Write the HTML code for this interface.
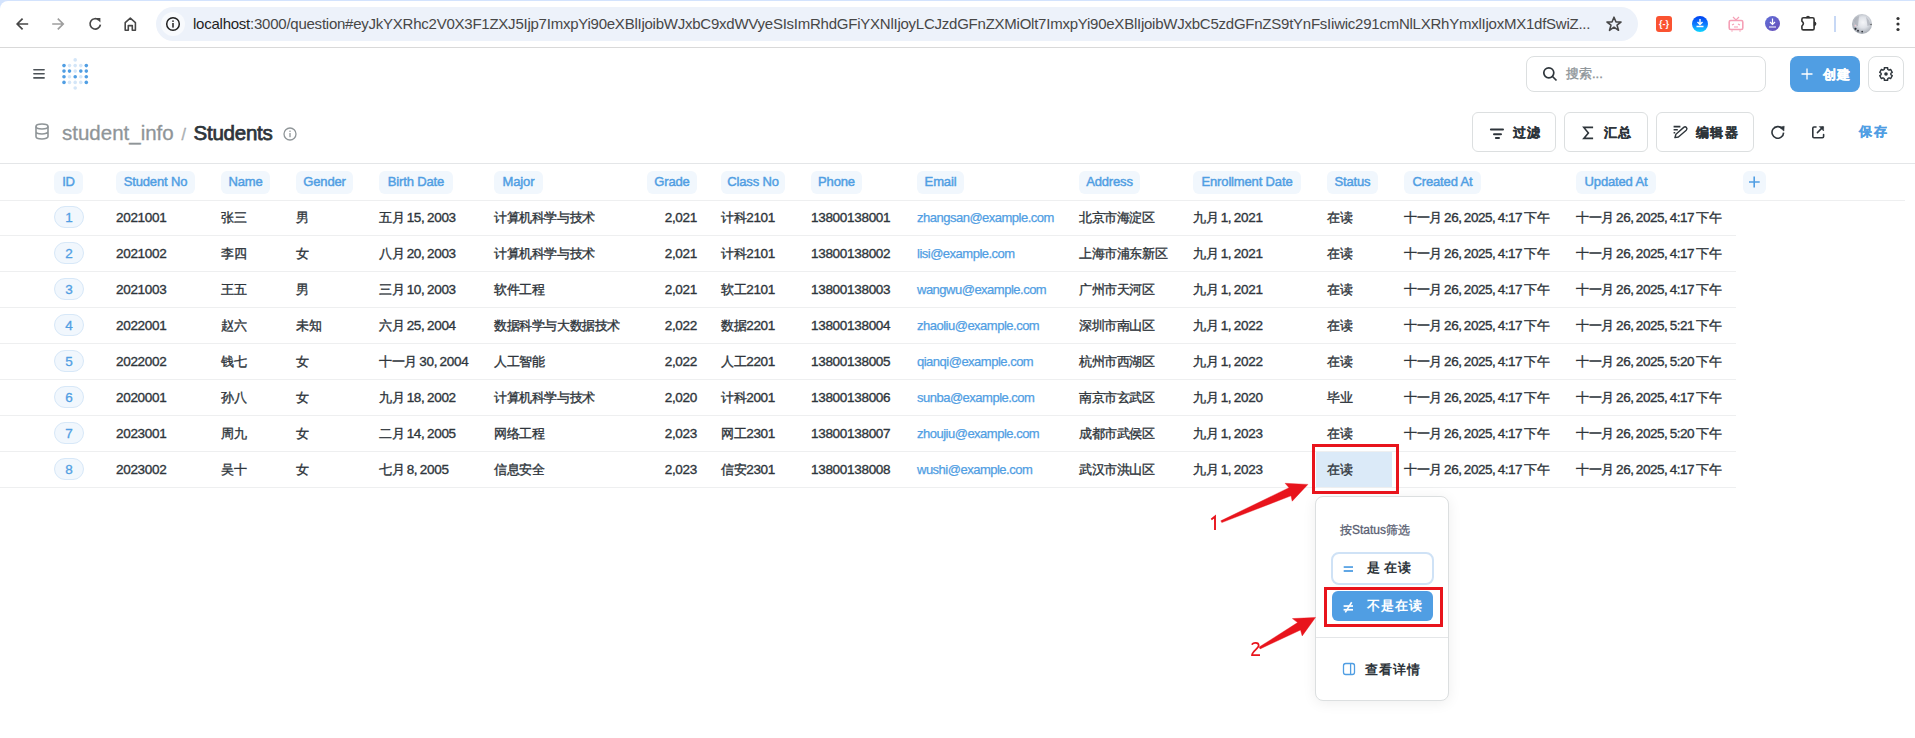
<!DOCTYPE html>
<html><head><meta charset="utf-8">
<style>
*{box-sizing:border-box;margin:0;padding:0}
html,body{width:1915px;height:738px;overflow:hidden;background:#fff;font-family:"Liberation Sans",sans-serif;position:relative}
.abs{position:absolute}
/* chrome */
#topstrip{position:absolute;left:0;top:0;width:1915px;height:12px;background:#d3e3fd}
#toolbar{position:absolute;left:0;top:1px;width:1915px;height:46px;background:#fff;border-top-left-radius:8px}
#tbline{position:absolute;left:0;top:47px;width:1915px;height:1px;background:#d9d9d9}
#omni{position:absolute;left:156px;top:7px;width:1482px;height:34px;border-radius:17px;background:#edf2fa}
#infobg{position:absolute;left:161px;top:12px;width:24px;height:24px;border-radius:12px;background:#f8fafd}
#url{position:absolute;left:193px;top:14px;height:20px;line-height:20px;font-size:15px;color:#474747;white-space:nowrap;letter-spacing:-0.24px}
#url b{font-weight:normal;color:#1f1f1f}
/* metabase nav */
#search{position:absolute;left:1526px;top:56px;width:240px;height:36px;border:1px solid #dcdfe0;border-radius:8px;background:#fff}
#search span{position:absolute;left:39px;top:9px;font-size:13px;color:#8e9599;-webkit-text-stroke:0.35px #8e9599;line-height:16px}
#create{position:absolute;left:1790px;top:56px;width:70px;height:36px;border-radius:8px;background:#509ee3;color:#fff;font-weight:bold;font-size:13px;letter-spacing:1.2px;-webkit-text-stroke:0.3px #fff}
#gear{position:absolute;left:1868px;top:56px;width:36px;height:36px;border:1px solid #dcdfe0;border-radius:8px;background:#fff}
/* title */
#crumb{position:absolute;left:62px;top:121px;font-size:20.5px;line-height:24px;color:#8f9598;white-space:nowrap;-webkit-text-stroke:0.3px #8f9598}
#crumb b{color:#2e353b;font-weight:normal;font-size:20.5px;letter-spacing:-0.25px;-webkit-text-stroke:0.75px #2e353b}
.btn{position:absolute;top:112px;height:40px;border:1px solid #dcdfe0;border-radius:6px;background:#fff;font-size:13px;letter-spacing:1.2px;font-weight:bold;color:#2e353b;-webkit-text-stroke:0.3px #2e353b}
.btn span{position:absolute;top:10.5px;line-height:17px}
#save{position:absolute;left:1859px;top:122.5px;font-size:13px;letter-spacing:1.5px;font-weight:bold;color:#509ee3;-webkit-text-stroke:0.3px #509ee3;line-height:17px}
/* table */
#ttop{position:absolute;left:0;top:163px;width:1915px;height:1px;background:#e4e6e8}
#hbot{position:absolute;left:0;top:200px;width:1905px;height:1px;background:#eeeff0}
.hp{position:absolute;top:171px;height:23px;border-radius:6px;background:#f1f7fd;color:#509ee3;font-size:13px;-webkit-text-stroke:0.45px #509ee3;line-height:22.5px;text-align:center;white-space:nowrap;letter-spacing:-0.15px}
.hp.plus svg{position:absolute;left:5.5px;top:5px}
.row{position:absolute;left:0;width:1736px;height:36px;border-bottom:1px solid #eeeff0}
.row .c{position:absolute;top:8.5px;line-height:17px;font-size:13.5px;letter-spacing:-0.3px;color:#2e353b;white-space:nowrap;-webkit-text-stroke:0.35px #2e353b;word-spacing:-1px}
.row .c .k{letter-spacing:-0.4px;font-size:13px}
.row .c.dt{letter-spacing:-0.45px}
.row .c.em{color:#509ee3;-webkit-text-stroke:0.25px #509ee3;font-size:13px;letter-spacing:-0.5px}
.idp{position:absolute;left:54px;top:6px;width:30px;height:22px;border-radius:11px;border:1px solid #d7e8f8;background:#f1f7fd;color:#509ee3;font-size:13.5px;-webkit-text-stroke:0.3px #509ee3;text-align:center;line-height:21px}
/* popover */
#hlcell{position:absolute;left:1316px;top:452px;width:76px;height:35px;background:#dbeaf8}
#pop{position:absolute;left:1315px;top:496px;width:134px;height:205px;border:1px solid #dcdfe0;border-radius:8px;background:#fff;box-shadow:0 2px 14px rgba(0,0,0,0.07)}
.redbox{position:absolute;border:3px solid #e8141c}
</style></head>
<body>
<div id="topstrip"></div>
<div id="toolbar"></div>
<div id="tbline"></div>
<!-- nav icons -->
<svg class="abs" style="left:14px;top:14px" width="20" height="20" viewBox="0 0 20 20"><path d="M14.2 10H3.5M8.6 4.6L3.2 10L8.6 15.4" fill="none" stroke="#474747" stroke-width="1.7"/></svg>
<svg class="abs" style="left:50px;top:14px" width="20" height="20" viewBox="0 0 20 20"><path d="M2.2 10H12.9M7.8 4.6L13.2 10L7.8 15.4" fill="none" stroke="#9e9e9e" stroke-width="1.7"/></svg>
<svg class="abs" style="left:86px;top:14px" width="20" height="20" viewBox="0 0 20 20"><path d="M14.4 10.6A5.2 5.2 0 1 1 12.9 6.2" fill="none" stroke="#474747" stroke-width="1.7"/><path d="M10 4.1H14.4V8.5Z" fill="#474747"/></svg>
<svg class="abs" style="left:122px;top:14px" width="20" height="20" viewBox="0 0 20 20"><path d="M3.2 16.2V8.6L8.3 4.2L13.4 8.6V16.2H10.3V11.6H6.3V16.2Z" fill="none" stroke="#474747" stroke-width="1.6" stroke-linejoin="round"/></svg>
<div id="omni"></div>
<div id="infobg"></div>
<svg class="abs" style="left:165px;top:16px" width="16" height="16" viewBox="0 0 16 16"><circle cx="8" cy="8" r="6.3" fill="none" stroke="#1f1f1f" stroke-width="1.5"/><rect x="7.25" y="7" width="1.5" height="4.6" fill="#1f1f1f"/><rect x="7.25" y="4.4" width="1.5" height="1.5" fill="#1f1f1f"/></svg>
<div id="url"><b>localhost</b>:3000/question#eyJkYXRhc2V0X3F1ZXJ5Ijp7ImxpYi90eXBlIjoibWJxbC9xdWVyeSIsImRhdGFiYXNlIjoyLCJzdGFnZXMiOlt7ImxpYi90eXBlIjoibWJxbC5zdGFnZS9tYnFsIiwic291cmNlLXRhYmxlIjoxMX1dfSwiZ...</div>
<svg class="abs" style="left:1604px;top:14px" width="20" height="20" viewBox="0 0 20 20"><path d="M10 3.2L12 8H17L13 11.1L14.5 16.3L10 13.2L5.5 16.3L7 11.1L3 8H8Z" fill="none" stroke="#474747" stroke-width="1.6" stroke-linejoin="round"/></svg>
<!-- extensions -->
<div class="abs" style="left:1656px;top:16px;width:16px;height:16px;border-radius:3px;background:#fa5331;color:#fff;font-size:9px;line-height:16px;text-align:center;font-weight:bold">{-}</div>
<div class="abs" style="left:1692px;top:16px;width:16px;height:16px;border-radius:8px;background:linear-gradient(#0040f0,#1080ff 55%,#10d8ff)"></div>
<svg class="abs" style="left:1696px;top:19px" width="8" height="9" viewBox="0 0 8 9"><path d="M4 0V5M1.5 3L4 5.5L6.5 3M0.5 7.5H7.5" fill="none" stroke="#fff" stroke-width="1.4"/></svg>
<svg class="abs" style="left:1728px;top:16px" width="16" height="16" viewBox="0 0 16 16"><path d="M5 1L8 4L11 1" fill="none" stroke="#f5a0b6" stroke-width="1.2"/><rect x="1.2" y="4.5" width="13.6" height="9" rx="1.5" fill="none" stroke="#f5a0b6" stroke-width="1.6"/><path d="M4 9L6 8M12 9L10 8M6 11H10" stroke="#f5a0b6" stroke-width="1.2"/><path d="M4 14.5V15.5M12 14.5V15.5" stroke="#f5a0b6" stroke-width="1.5"/></svg>
<div class="abs" style="left:1765px;top:16px;width:15px;height:15px;border-radius:8px;background:linear-gradient(135deg,#5f6fd8,#6a4fb8)"></div>
<svg class="abs" style="left:1768px;top:18px" width="9" height="11" viewBox="0 0 9 11"><path d="M4.5 0.5V6M2 4L4.5 6.5L7 4M1 9H8" fill="none" stroke="#fff" stroke-width="1.2"/></svg>
<svg class="abs" style="left:1795px;top:10px" width="30" height="28" viewBox="0 0 30 28"><path d="M6.9 9.3A1.5 1.5 0 0 1 8.4 7.8H17.6A1.5 1.5 0 0 1 19.1 9.3V18.4A1.5 1.5 0 0 1 17.6 19.9H8.4A1.5 1.5 0 0 1 6.9 18.4V16Q9.9 13.6 6.9 11.2Z" fill="none" stroke="#333" stroke-width="1.6" stroke-linejoin="round"/><path d="M10.7 8.2A2.3 2.5 0 0 1 15.3 8.2Z" fill="#333"/><path d="M18.8 11.5A2.6 2.3 0 0 1 18.8 16.1Z" fill="#333"/></svg>
<div class="abs" style="left:1834px;top:16px;width:2px;height:16px;background:#c7d8f5"></div>
<svg class="abs" style="left:1852px;top:14px" width="20" height="20" viewBox="0 0 20 20"><defs><radialGradient id="av" cx="0.55" cy="0.42" r="0.6"><stop offset="0" stop-color="#f4f5f8"/><stop offset="0.45" stop-color="#dfe2e8"/><stop offset="1" stop-color="#9ca2ab"/></radialGradient></defs><circle cx="10" cy="10" r="10" fill="url(#av)"/><path d="M2 7Q3 3 7 2L6 12Q3 12 2 7Z" fill="#a6abb3" opacity="0.7"/><path d="M14 3Q18 6 18 11L15.5 12L14.5 5Z" fill="#a9aeb6" opacity="0.7"/><circle cx="3.5" cy="14.8" r="1.1" fill="#2a2d33"/><circle cx="6" cy="16.8" r="1" fill="#3a3d44"/><circle cx="10.2" cy="17.6" r="0.9" fill="#33363c"/><circle cx="19" cy="10.5" r="0.7" fill="#444"/><circle cx="3.4" cy="11.6" r="0.9" fill="#f0c8d4"/></svg>
<svg class="abs" style="left:1888px;top:14px" width="20" height="20" viewBox="0 0 20 20"><circle cx="10" cy="4.5" r="1.6" fill="#333"/><circle cx="10" cy="10" r="1.6" fill="#333"/><circle cx="10" cy="15.5" r="1.6" fill="#333"/></svg>

<!-- metabase nav -->
<svg class="abs" style="left:32px;top:67px" width="14" height="14" viewBox="0 0 14 14"><path d="M1.9 2.8H12.1M1.9 6.8H12.1M1.9 10.9H12.1" stroke="#4d5358" stroke-width="1.6" stroke-linecap="round"/></svg>
<svg class="abs" style="left:60px;top:56px" width="30" height="36" viewBox="0 0 30 36">
<g fill="#509ee3">
<circle cx="4" cy="9.6" r="1.8"/><circle cx="26.3" cy="9.6" r="1.8"/>
<circle cx="4" cy="15.1" r="1.8"/><circle cx="9.5" cy="15.1" r="1.8"/><circle cx="20.8" cy="15.1" r="1.8"/><circle cx="26.3" cy="15.1" r="1.8"/>
<circle cx="4" cy="20.8" r="1.8"/><circle cx="15.2" cy="20.8" r="1.8"/><circle cx="26.3" cy="20.8" r="1.8"/>
<circle cx="4" cy="26.4" r="1.8"/><circle cx="26.3" cy="26.4" r="1.8"/>
</g>
<g fill="#d4e6f8">
<circle cx="15.2" cy="3.9" r="1.8"/><circle cx="9.5" cy="9.6" r="1.8"/><circle cx="15.2" cy="9.6" r="1.8"/><circle cx="20.8" cy="9.6" r="1.8"/>
<circle cx="15.2" cy="15.1" r="1.8"/><circle cx="9.5" cy="20.8" r="1.8"/><circle cx="20.8" cy="20.8" r="1.8"/>
<circle cx="9.5" cy="26.4" r="1.8"/><circle cx="15.2" cy="26.4" r="1.8"/><circle cx="20.8" cy="26.4" r="1.8"/><circle cx="15.2" cy="32" r="1.8"/>
</g></svg>
<div id="search"><span>搜索...</span></div>
<svg class="abs" style="left:1542px;top:66px" width="16" height="16" viewBox="0 0 16 16"><circle cx="6.8" cy="6.8" r="5" fill="none" stroke="#2e353b" stroke-width="1.7"/><path d="M10.5 10.5L14.5 14.5" stroke="#2e353b" stroke-width="1.7"/></svg>
<div id="create"><svg class="abs" style="left:11px;top:12px" width="12" height="12" viewBox="0 0 12 12"><path d="M6 0.5V11.5M0.5 6H11.5" stroke="#fff" stroke-width="1.3"/></svg><span class="abs" style="left:33px;top:10px;line-height:17px">创建</span></div>
<div id="gear"></div>
<svg class="abs" style="left:1878px;top:66px" width="16" height="16" viewBox="0 0 16 16"><path d="M10.45 3.76 L9.76 3.43 L9.68 1.72 L6.32 1.72 L6.24 3.43 L5.55 3.76 L4.92 4.19 L3.40 3.40 L1.72 6.32 L3.16 7.23 L3.10 8.00 L3.16 8.77 L1.72 9.68 L3.40 12.60 L4.92 11.81 L5.55 12.24 L6.24 12.57 L6.32 14.28 L9.68 14.28 L9.76 12.57 L10.45 12.24 L11.08 11.81 L12.60 12.60 L14.28 9.68 L12.84 8.77 L12.90 8.00 L12.84 7.23 L14.28 6.32 L12.60 3.40 L11.08 4.19Z" fill="none" stroke="#2e353b" stroke-width="1.4" stroke-linejoin="round"/><circle cx="8" cy="8" r="1.8" fill="#2e353b"/></svg>

<!-- title bar -->
<svg class="abs" style="left:34px;top:123.4px" width="16" height="17" viewBox="0 0 16 17"><ellipse cx="8" cy="3.5" rx="6" ry="2.5" fill="none" stroke="#8f9598" stroke-width="1.6"/><path d="M2 3.5V13.5A6 2.5 0 0 0 14 13.5V3.5M2 8.5A6 2.5 0 0 0 14 8.5" fill="none" stroke="#8f9598" stroke-width="1.6"/></svg>
<div id="crumb">student_info <span style="font-size:16px;color:#b5b9bc;margin-left:2px">/</span> <b style="margin-left:2px">Students</b></div>
<svg class="abs" style="left:283px;top:127px" width="14" height="14" viewBox="0 0 14 14"><circle cx="7" cy="7" r="6" fill="none" stroke="#8f9598" stroke-width="1.3"/><rect x="6.35" y="6" width="1.3" height="4.2" fill="#8f9598"/><rect x="6.35" y="3.6" width="1.3" height="1.3" fill="#8f9598"/></svg>

<div class="btn" style="left:1472px;width:84px"><svg class="abs" style="left:15px;top:12px" width="16" height="16" viewBox="0 0 16 16"><path d="M2.9 4.5H15M6 9.2H13M7.9 12.9H11" stroke="#2e353b" stroke-width="2" stroke-linecap="round"/></svg><span style="left:39.5px">过滤</span></div>
<div class="btn" style="left:1564px;width:84px"><svg class="abs" style="left:17px;top:12.5px" width="12" height="14" viewBox="0 0 12 14"><path d="M11.1 1.4H1.8L6.4 6.9L1.8 12.4H11.1" fill="none" stroke="#2e353b" stroke-width="1.6"/></svg><span style="left:39px">汇总</span></div>
<div class="btn" style="left:1656px;width:98px"><svg class="abs" style="left:15px;top:9px" width="18" height="18" viewBox="0 0 18 18"><path d="M1.6 4.6H8.4M1.6 7.7H5.8M1.6 10.7H3.2" stroke="#2e353b" stroke-width="1.6"/><path d="M2.9 15.6L3.91 12.2L11.75 5.37A1.9 1.9 0 0 1 14.25 8.23L6.41 15.06Z" fill="none" stroke="#2e353b" stroke-width="1.4" stroke-linejoin="round"/></svg><span style="left:39.3px">编辑器</span></div>
<svg class="abs" style="left:1770px;top:124.7px" width="16" height="16" viewBox="0 0 16 16"><path d="M13.6 7.6A5.8 5.8 0 1 1 12.2 3.6" fill="none" stroke="#2e353b" stroke-width="1.6"/><path d="M9.6 2.3L14.2 1.2L13.9 6Z" fill="#2e353b" stroke="#2e353b" stroke-width="0.6" stroke-linejoin="round"/></svg>
<svg class="abs" style="left:1810px;top:124px" width="16" height="16" viewBox="0 0 16 16"><path d="M6 3H4A1.2 1.2 0 0 0 2.8 4.2V12.6A1.2 1.2 0 0 0 4 13.8H12.4A1.2 1.2 0 0 0 13.6 12.6V10.6" fill="none" stroke="#2e353b" stroke-width="1.6" stroke-linecap="round"/><path d="M7.4 8.6L12.6 3.4" stroke="#2e353b" stroke-width="1.5" stroke-linecap="round"/><path d="M9.2 2.6H13.6V7Z" fill="#2e353b" stroke="#2e353b" stroke-width="0.5" stroke-linejoin="round"/></svg>
<div id="save">保存</div>

<!-- table -->
<div id="ttop"></div>
<div class="hp" style="left:54px;width:29px">ID</div>
<div class="hp" style="left:116px;width:79px">Student No</div>
<div class="hp" style="left:221px;width:49px">Name</div>
<div class="hp" style="left:296px;width:57px">Gender</div>
<div class="hp" style="left:379px;width:74px">Birth Date</div>
<div class="hp" style="left:494px;width:49px">Major</div>
<div class="hp" style="left:647px;width:50px">Grade</div>
<div class="hp" style="left:721px;width:64px">Class No</div>
<div class="hp" style="left:811px;width:51px">Phone</div>
<div class="hp" style="left:917px;width:47px">Email</div>
<div class="hp" style="left:1079px;width:61px">Address</div>
<div class="hp" style="left:1193px;width:108px">Enrollment Date</div>
<div class="hp" style="left:1327px;width:51px">Status</div>
<div class="hp" style="left:1404px;width:77px">Created At</div>
<div class="hp" style="left:1576px;width:80px">Updated At</div>
<div class="hp plus" style="left:1743px;width:23px"><svg width="12" height="12" viewBox="0 0 12 12"><path d="M5.2 0.5V11.5M-0.3 6H10.7" stroke="#509EE3" stroke-width="1.6"/></svg></div>
<div id="hbot"></div>
<div id="hlcell"></div>
<div class="row" style="top:200px">
<div class="idp">1</div>
<div class="c" style="left:116px">2021001</div>
<div class="c" style="left:221px"><span class="k">张三</span></div>
<div class="c" style="left:296px"><span class="k">男</span></div>
<div class="c" style="left:379px"><span class="k">五月</span> 15, 2003</div>
<div class="c" style="left:494px"><span class="k">计算机科学与技术</span></div>
<div class="c num" style="right:1039px">2,021</div>
<div class="c" style="left:721px"><span class="k">计科</span>2101</div>
<div class="c" style="left:811px">13800138001</div>
<div class="c em" style="left:917px">zhangsan@example.com</div>
<div class="c" style="left:1079px"><span class="k">北京市海淀区</span></div>
<div class="c" style="left:1193px"><span class="k">九月</span> 1, 2021</div>
<div class="c" style="left:1327px"><span class="k">在读</span></div>
<div class="c dt" style="left:1404px"><span class="k">十一月</span> 26, 2025, 4:17 <span class="k">下午</span></div>
<div class="c dt" style="left:1576px"><span class="k">十一月</span> 26, 2025, 4:17 <span class="k">下午</span></div>
</div>
<div class="row" style="top:236px">
<div class="idp">2</div>
<div class="c" style="left:116px">2021002</div>
<div class="c" style="left:221px"><span class="k">李四</span></div>
<div class="c" style="left:296px"><span class="k">女</span></div>
<div class="c" style="left:379px"><span class="k">八月</span> 20, 2003</div>
<div class="c" style="left:494px"><span class="k">计算机科学与技术</span></div>
<div class="c num" style="right:1039px">2,021</div>
<div class="c" style="left:721px"><span class="k">计科</span>2101</div>
<div class="c" style="left:811px">13800138002</div>
<div class="c em" style="left:917px">lisi@example.com</div>
<div class="c" style="left:1079px"><span class="k">上海市浦东新区</span></div>
<div class="c" style="left:1193px"><span class="k">九月</span> 1, 2021</div>
<div class="c" style="left:1327px"><span class="k">在读</span></div>
<div class="c dt" style="left:1404px"><span class="k">十一月</span> 26, 2025, 4:17 <span class="k">下午</span></div>
<div class="c dt" style="left:1576px"><span class="k">十一月</span> 26, 2025, 4:17 <span class="k">下午</span></div>
</div>
<div class="row" style="top:272px">
<div class="idp">3</div>
<div class="c" style="left:116px">2021003</div>
<div class="c" style="left:221px"><span class="k">王五</span></div>
<div class="c" style="left:296px"><span class="k">男</span></div>
<div class="c" style="left:379px"><span class="k">三月</span> 10, 2003</div>
<div class="c" style="left:494px"><span class="k">软件工程</span></div>
<div class="c num" style="right:1039px">2,021</div>
<div class="c" style="left:721px"><span class="k">软工</span>2101</div>
<div class="c" style="left:811px">13800138003</div>
<div class="c em" style="left:917px">wangwu@example.com</div>
<div class="c" style="left:1079px"><span class="k">广州市天河区</span></div>
<div class="c" style="left:1193px"><span class="k">九月</span> 1, 2021</div>
<div class="c" style="left:1327px"><span class="k">在读</span></div>
<div class="c dt" style="left:1404px"><span class="k">十一月</span> 26, 2025, 4:17 <span class="k">下午</span></div>
<div class="c dt" style="left:1576px"><span class="k">十一月</span> 26, 2025, 4:17 <span class="k">下午</span></div>
</div>
<div class="row" style="top:308px">
<div class="idp">4</div>
<div class="c" style="left:116px">2022001</div>
<div class="c" style="left:221px"><span class="k">赵六</span></div>
<div class="c" style="left:296px"><span class="k">未知</span></div>
<div class="c" style="left:379px"><span class="k">六月</span> 25, 2004</div>
<div class="c" style="left:494px"><span class="k">数据科学与大数据技术</span></div>
<div class="c num" style="right:1039px">2,022</div>
<div class="c" style="left:721px"><span class="k">数据</span>2201</div>
<div class="c" style="left:811px">13800138004</div>
<div class="c em" style="left:917px">zhaoliu@example.com</div>
<div class="c" style="left:1079px"><span class="k">深圳市南山区</span></div>
<div class="c" style="left:1193px"><span class="k">九月</span> 1, 2022</div>
<div class="c" style="left:1327px"><span class="k">在读</span></div>
<div class="c dt" style="left:1404px"><span class="k">十一月</span> 26, 2025, 4:17 <span class="k">下午</span></div>
<div class="c dt" style="left:1576px"><span class="k">十一月</span> 26, 2025, 5:21 <span class="k">下午</span></div>
</div>
<div class="row" style="top:344px">
<div class="idp">5</div>
<div class="c" style="left:116px">2022002</div>
<div class="c" style="left:221px"><span class="k">钱七</span></div>
<div class="c" style="left:296px"><span class="k">女</span></div>
<div class="c" style="left:379px"><span class="k">十一月</span> 30, 2004</div>
<div class="c" style="left:494px"><span class="k">人工智能</span></div>
<div class="c num" style="right:1039px">2,022</div>
<div class="c" style="left:721px"><span class="k">人工</span>2201</div>
<div class="c" style="left:811px">13800138005</div>
<div class="c em" style="left:917px">qianqi@example.com</div>
<div class="c" style="left:1079px"><span class="k">杭州市西湖区</span></div>
<div class="c" style="left:1193px"><span class="k">九月</span> 1, 2022</div>
<div class="c" style="left:1327px"><span class="k">在读</span></div>
<div class="c dt" style="left:1404px"><span class="k">十一月</span> 26, 2025, 4:17 <span class="k">下午</span></div>
<div class="c dt" style="left:1576px"><span class="k">十一月</span> 26, 2025, 5:20 <span class="k">下午</span></div>
</div>
<div class="row" style="top:380px">
<div class="idp">6</div>
<div class="c" style="left:116px">2020001</div>
<div class="c" style="left:221px"><span class="k">孙八</span></div>
<div class="c" style="left:296px"><span class="k">女</span></div>
<div class="c" style="left:379px"><span class="k">九月</span> 18, 2002</div>
<div class="c" style="left:494px"><span class="k">计算机科学与技术</span></div>
<div class="c num" style="right:1039px">2,020</div>
<div class="c" style="left:721px"><span class="k">计科</span>2001</div>
<div class="c" style="left:811px">13800138006</div>
<div class="c em" style="left:917px">sunba@example.com</div>
<div class="c" style="left:1079px"><span class="k">南京市玄武区</span></div>
<div class="c" style="left:1193px"><span class="k">九月</span> 1, 2020</div>
<div class="c" style="left:1327px"><span class="k">毕业</span></div>
<div class="c dt" style="left:1404px"><span class="k">十一月</span> 26, 2025, 4:17 <span class="k">下午</span></div>
<div class="c dt" style="left:1576px"><span class="k">十一月</span> 26, 2025, 4:17 <span class="k">下午</span></div>
</div>
<div class="row" style="top:416px">
<div class="idp">7</div>
<div class="c" style="left:116px">2023001</div>
<div class="c" style="left:221px"><span class="k">周九</span></div>
<div class="c" style="left:296px"><span class="k">女</span></div>
<div class="c" style="left:379px"><span class="k">二月</span> 14, 2005</div>
<div class="c" style="left:494px"><span class="k">网络工程</span></div>
<div class="c num" style="right:1039px">2,023</div>
<div class="c" style="left:721px"><span class="k">网工</span>2301</div>
<div class="c" style="left:811px">13800138007</div>
<div class="c em" style="left:917px">zhoujiu@example.com</div>
<div class="c" style="left:1079px"><span class="k">成都市武侯区</span></div>
<div class="c" style="left:1193px"><span class="k">九月</span> 1, 2023</div>
<div class="c" style="left:1327px"><span class="k">在读</span></div>
<div class="c dt" style="left:1404px"><span class="k">十一月</span> 26, 2025, 4:17 <span class="k">下午</span></div>
<div class="c dt" style="left:1576px"><span class="k">十一月</span> 26, 2025, 5:20 <span class="k">下午</span></div>
</div>
<div class="row" style="top:452px">
<div class="idp">8</div>
<div class="c" style="left:116px">2023002</div>
<div class="c" style="left:221px"><span class="k">吴十</span></div>
<div class="c" style="left:296px"><span class="k">女</span></div>
<div class="c" style="left:379px"><span class="k">七月</span> 8, 2005</div>
<div class="c" style="left:494px"><span class="k">信息安全</span></div>
<div class="c num" style="right:1039px">2,023</div>
<div class="c" style="left:721px"><span class="k">信安</span>2301</div>
<div class="c" style="left:811px">13800138008</div>
<div class="c em" style="left:917px">wushi@example.com</div>
<div class="c" style="left:1079px"><span class="k">武汉市洪山区</span></div>
<div class="c" style="left:1193px"><span class="k">九月</span> 1, 2023</div>
<div class="c" style="left:1327px"><span class="k">在读</span></div>
<div class="c dt" style="left:1404px"><span class="k">十一月</span> 26, 2025, 4:17 <span class="k">下午</span></div>
<div class="c dt" style="left:1576px"><span class="k">十一月</span> 26, 2025, 4:17 <span class="k">下午</span></div>
</div>

<!-- popover -->
<div id="pop">
  <div class="abs" style="left:24px;top:26px;font-size:12px;color:#5a6072;-webkit-text-stroke:0.3px #5a6072;line-height:14px;white-space:nowrap">按Status筛选</div>
  <div class="abs" style="left:15px;top:55px;width:103px;height:33px;border:2px solid #cfe2f6;border-radius:8px;background:#fff">
    
    <span class="abs" style="left:34px;top:5px;font-size:13px;color:#2e353b;font-weight:bold;letter-spacing:1px;word-spacing:-2px;line-height:17px;white-space:nowrap">是 在读</span>
  </div>
  <div class="abs" style="left:16px;top:94px;width:101px;height:30px;border-radius:6px;background:#509ee3">
    
    <span class="abs" style="left:35px;top:5.5px;font-size:13px;color:#fff;font-weight:bold;letter-spacing:1px;line-height:17px;white-space:nowrap">不是在读</span>
  </div>
  <div class="abs" style="left:0;top:140px;width:132px;height:1px;background:#e4e6e8"></div>
  <svg class="abs" style="left:26px;top:165px" width="14" height="14" viewBox="0 0 14 14"><rect x="1.5" y="1.5" width="11" height="11" rx="2.2" fill="none" stroke="#509ee3" stroke-width="1.3"/><path d="M8.6 1.5V12.5" stroke="#509ee3" stroke-width="1.3"/></svg>
  <div class="abs" style="left:49px;top:164px;font-size:13px;color:#2e353b;font-weight:bold;letter-spacing:1px;line-height:17px;white-space:nowrap">查看详情</div>
</div>

<svg class="abs" style="left:1343px;top:562px" width="11" height="12" viewBox="0 0 11 12"><rect x="0.7" y="4.2" width="9.3" height="1.7" fill="#509ee3"/><rect x="0.7" y="8.1" width="9.3" height="1.8" fill="#509ee3"/></svg>
<svg class="abs" style="left:1343px;top:600px" width="11" height="14" viewBox="0 0 11 14"><rect x="0.6" y="5.2" width="9.4" height="1.7" fill="#fff"/><rect x="0.6" y="8.9" width="9.4" height="1.7" fill="#fff"/><path d="M2.3 12.4L8.7 2.2" stroke="#fff" stroke-width="1.6"/></svg>
<!-- annotations -->
<div class="redbox" style="left:1312px;top:444px;width:87px;height:50px"></div>
<div class="redbox" style="left:1324px;top:587px;width:119px;height:40px"></div>
<svg class="abs" style="left:0;top:0" width="1915" height="738" viewBox="0 0 1915 738">
<path d="M1220.8 520.8L1289 487.7L1285.1 483.3L1307.9 484.4L1292.2 501.2L1291 495.8L1221.8 522.6Z" fill="#e8141c" stroke="#e8141c" stroke-width="0.4" stroke-linejoin="round"/>
<path d="M1215 530V516.4L1211.3 519.4" fill="none" stroke="#e8141c" stroke-width="1.9"/>
<path d="M1259.1 647.1L1297.6 622.6L1292.4 618.6L1315.5 617.4L1302.2 635.9L1300.5 630L1260.1 648.9Z" fill="#e8141c" stroke="#e8141c" stroke-width="0.4" stroke-linejoin="round"/>
<path d="M1252 644.8C1252.6 642.6 1258.6 641.6 1258.7 645.5C1258.8 648.2 1252.2 651.3 1252 655.1H1260" fill="none" stroke="#e8141c" stroke-width="1.7"/>
</svg>
</body></html>
